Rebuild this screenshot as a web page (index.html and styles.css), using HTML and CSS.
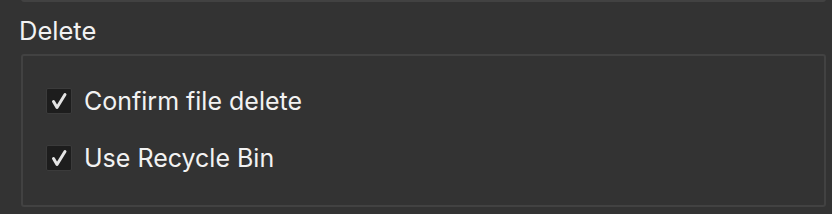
FILE: index.html
```html
<!DOCTYPE html>
<html>
<head>
<meta charset="utf-8">
<link rel="stylesheet" href="styles.css">
</head>
<body>
<div class="prev-box"></div>
<div class="section-title">Delete</div>
<div class="group">
  <label class="row">
    <span class="checkbox"><svg viewBox="0 0 26 26" width="26" height="26"><polyline points="7.5,13.5 11,19.5 19,6.5" fill="none" stroke="#e4e4e4" stroke-width="3" stroke-linecap="round" stroke-linejoin="round"/></svg></span>
    <span class="label">Confirm file delete</span>
  </label>
  <label class="row">
    <span class="checkbox"><svg viewBox="0 0 26 26" width="26" height="26"><polyline points="7.5,13.5 11,19.5 19,6.5" fill="none" stroke="#e4e4e4" stroke-width="3" stroke-linecap="round" stroke-linejoin="round"/></svg></span>
    <span class="label">Use Recycle Bin</span>
  </label>
</div>
</body>
</html>
```
FILE: styles.css
```css
html, body {
  margin: 0;
  padding: 0;
  background: #333333;
}
body {
  font-family: Inter, "Liberation Sans", sans-serif;
  color: #f2f2f2;
  width: 832px;
  height: 214px;
  overflow: hidden;
}
.prev-box {
  margin: -10px 6px 0 21px;
  height: 10px;
  border: 2px solid #424242;
  border-top: none;
  border-radius: 0 0 3px 3px;
}
.section-title {
  margin: 14px 0 0 19px;
  font-size: 25.5px;
  line-height: 30px;
}
.group {
  margin: 8px 6px 0 21px;
  border: 2px solid #424242;
  border-radius: 3px;
  padding: 32px 0 34px 23px;
  display: flex;
  flex-direction: column;
  gap: 31px;
}
.row {
  display: flex;
  align-items: center;
  gap: 12px;
  height: 26px;
}
.checkbox {
  width: 26px;
  height: 26px;
  box-sizing: border-box;
  background: #1d1d1d;
  border: 1px solid #3b3b3b;
  border-radius: 2px;
  display: flex;
  align-items: center;
  justify-content: center;
}
.checkbox svg {
  display: block;
  flex: none;
}
.label {
  font-size: 25px;
  line-height: 26px;
}
```
